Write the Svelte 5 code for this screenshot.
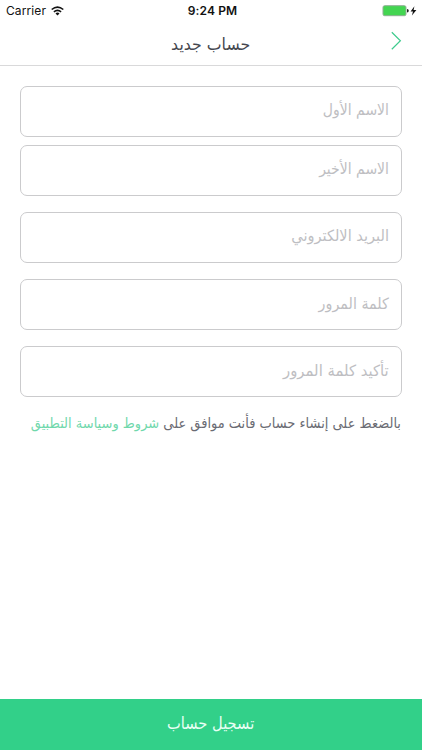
<script>
  const fields = [
    { label: 'الاسم الأول', stretch: 1 },
    { label: 'الاسم الأخير', stretch: 1 },
    { label: 'البريد الالكتروني', stretch: 1.04 },
    { label: 'كلمة المرور', stretch: 1.02 },
    { label: 'تأكيد كلمة المرور', stretch: 1.06 }
  ];
</script>

<div class="screen" dir="rtl">
  <div class="status" dir="ltr">
    <div class="carrier">
      <span>Carrier</span>
      <svg width="13" height="10" viewBox="0 0 13 10" fill="none" stroke="#111" stroke-width="1.6">
        <path d="M.7 3.5Q6.5-1.4 12.3 3.5M2.9 5.8Q6.5 2.8 10.1 5.8" />
        <path d="M4.5 7.4Q6.5 5.8 8.5 7.4L6.5 9.6Z" fill="#111" stroke="none" />
      </svg>
    </div>
    <span class="time">9:24 PM</span>
    <svg class="battery" width="36" height="12" viewBox="0 0 36 12">
      <rect x="1" y=".7" width="23" height="10" rx="1.6" fill="#43d551" stroke="#8fae93" />
      <path d="M25 4Q26.8 4.3 26.8 5.8T25 7.6Z" fill="#222" />
      <path d="M32.4 1.2 28.6 6.4H31L29.9 10.5 34.4 5.1H31.6Z" fill="#111" />
    </svg>
  </div>

  <header>
    <h1><span>حساب جديد</span></h1>
    <button class="back" aria-label="رجوع">
      <svg width="12" height="20" viewBox="0 0 12 20" fill="none" stroke="#3fcb8e" stroke-width="1.2">
        <path d="M1.8 1.2 10.4 9.7 1.8 18.2" />
      </svg>
    </button>
  </header>

  <main>
    {#each fields as field}
      <div class="field"><span style:transform={`scale(${field.stretch}, 1.1)`}>{field.label}</span></div>
    {/each}
    <p class="terms"><span>بالضغط على إنشاء حساب فأنت موافق على <a href="#terms">شروط وسياسة التطبيق</a></span></p>
  </main>

  <button class="submit"><span>تسجيل حساب</span></button>
</div>

<style>
  :global(body) { margin: 0; background: #fff; }
  .screen {
    width: 422px; height: 750px; display: flex; flex-direction: column;
    background: #fff; overflow: hidden; font-family: "DejaVu Sans", sans-serif;
  }
  span { display: inline-block; white-space: nowrap; }
  .status {
    height: 22px; display: grid; grid-template-columns: 1fr auto 1fr; align-items: center;
    padding: 0 4px 0 6px; font: 12px/22px Inter, sans-serif; color: #111; box-sizing: border-box;
  }
  .carrier { display: flex; align-items: center; gap: 5px; letter-spacing: .1px; }
  .time { font-weight: 600; letter-spacing: .1px; padding-left: 1px; }
  .battery { justify-self: end; }
  header {
    height: 44px; flex: none; box-sizing: border-box; border-bottom: 1px solid #d9d9da;
    display: grid; grid-template-columns: 40px 1fr 40px;
  }
  h1 { grid-column: 2; grid-row: 1; margin: 0; text-align: center; font-size: 15px; line-height: 44px; font-weight: 400; color: #45474f; }
  h1 span { transform: scale(1.05, 1.1); }
  .back { grid-column: 1; grid-row: 1; border: 0; padding: 9px 20px 0 0; background: none; display: flex; align-items: flex-start; }
  main { flex: 1; padding: 20px 20px 0; display: flex; flex-direction: column; }
  .field {
    height: 51px; box-sizing: border-box; border: 1px solid #cbcbcd; border-radius: 7px;
    margin-bottom: 16px; padding: 0 12px; font-size: 14px; line-height: 46px; color: #bebec2;
  }
  .field:first-child { margin-bottom: 8px; }
  .field span, .terms span { transform-origin: right center; }
  .terms { margin: 0; padding-right: 1px; font-size: 13px; line-height: 22px; color: #6a6b73; }
  .terms span { transform: scaleY(1.1); }
  .terms a { color: #70d8ac; text-decoration: none; }
  .submit { height: 51px; flex: none; border: 0; padding: 0; background: #32d089; color: #e8fff4; font: 15px/51px "DejaVu Sans", sans-serif; }
  .submit span { transform: scale(.977, 1.1); }
</style>
